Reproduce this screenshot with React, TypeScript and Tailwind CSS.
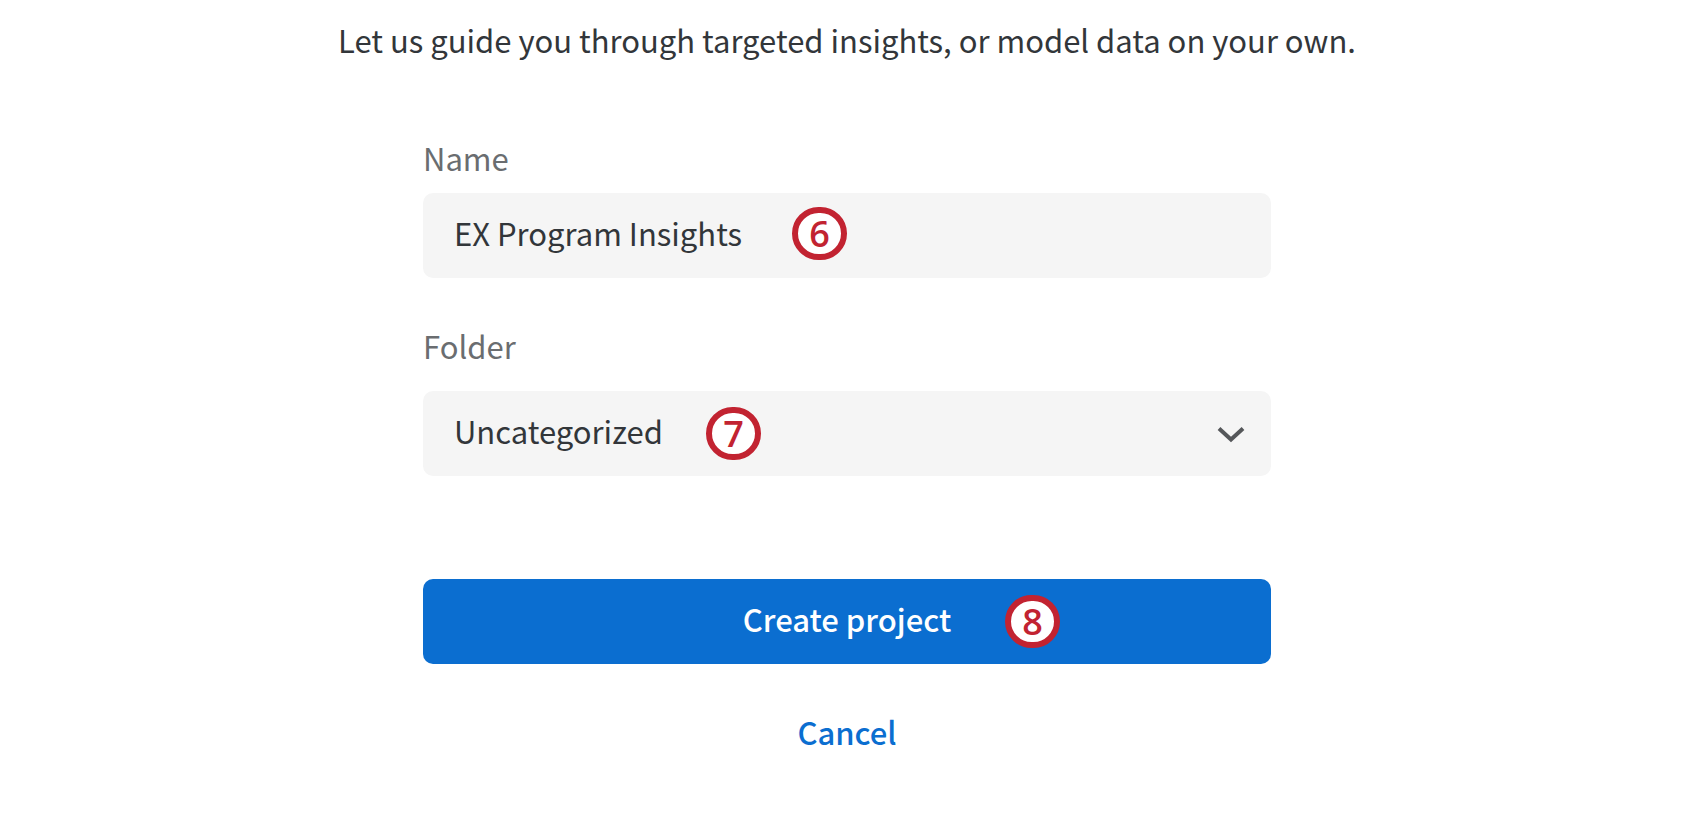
import { useState } from "react";
import type { FormEvent } from "react";
import clsx from "clsx";

interface StepBadgeProps {
	step: number;
	className?: string;
}

function StepBadge({ step, className }: StepBadgeProps) {
	return (
		<span
			className={clsx(
				"pointer-events-none absolute flex h-[53px] w-[55px] items-center justify-center rounded-full border-[6px] border-[#c22331] bg-white font-['Open_Sans',sans-serif] text-4xl font-semibold text-[#c22331]",
				className
			)}
		>
			{step}
		</span>
	);
}

function ChevronIcon() {
	return (
		<svg
			viewBox="0 0 28 18"
			className="pointer-events-none absolute top-[35px] right-[26px] h-[18px] w-7"
			fill="none"
			stroke="#55575a"
			strokeWidth="4"
			strokeLinecap="butt"
			aria-hidden="true"
		>
			<path d="M2 2.5 L14 13.5 L26 2.5" />
		</svg>
	);
}

const fieldClass =
	"block h-[85px] w-full appearance-none rounded-[10px] bg-[#f5f5f5] px-[31px] pb-1.5 text-[#32363a] outline-none";

export default function App() {
	const [name, setName] = useState("EX Program Insights");
	const [folder, setFolder] = useState("Uncategorized");

	const handleSubmit = (e: FormEvent) => {
		e.preventDefault();
	};

	return (
		<main className="min-h-screen bg-white pt-5 pr-1.5 font-['Noto_Sans_CJK_SC',sans-serif] text-[31px] leading-10 text-[#32363a]">
			<p className="text-center">Let us guide you through targeted insights, or model data on your own.</p>

			<form onSubmit={handleSubmit} className="mx-auto mt-[78px] flex w-full max-w-[848px] flex-col">
				<label htmlFor="project-name" className="text-[#6a6d70]">
					Name
				</label>
				<div className="relative mt-[15px]">
					<input
						id="project-name"
						type="text"
						className={fieldClass}
						value={name}
						onChange={(e) => setName(e.target.value)}
					/>
					<StepBadge step={6} className="top-3.5 left-[369px]" />
				</div>

				<label htmlFor="project-folder" className="mt-12 text-[#6a6d70]">
					Folder
				</label>
				<div className="relative mt-[25px]">
					<select
						id="project-folder"
						className={fieldClass}
						value={folder}
						onChange={(e) => setFolder(e.target.value)}
					>
						<option>Uncategorized</option>
					</select>
					<StepBadge step={7} className="top-4 left-[283px]" />
					<ChevronIcon />
				</div>

				<div className="relative mt-[103px]">
					<button
						type="submit"
						className="block h-[85px] w-full rounded-[10px] bg-[#0b6ed0] pb-1.5 font-medium text-white"
					>
						Create project
					</button>
					<StepBadge step={8} className="top-4 left-[582px]" />
				</div>

				<button type="button" className="mt-12 self-center font-medium text-[#0b6ed0]">
					Cancel
				</button>
			</form>
		</main>
	);
}
